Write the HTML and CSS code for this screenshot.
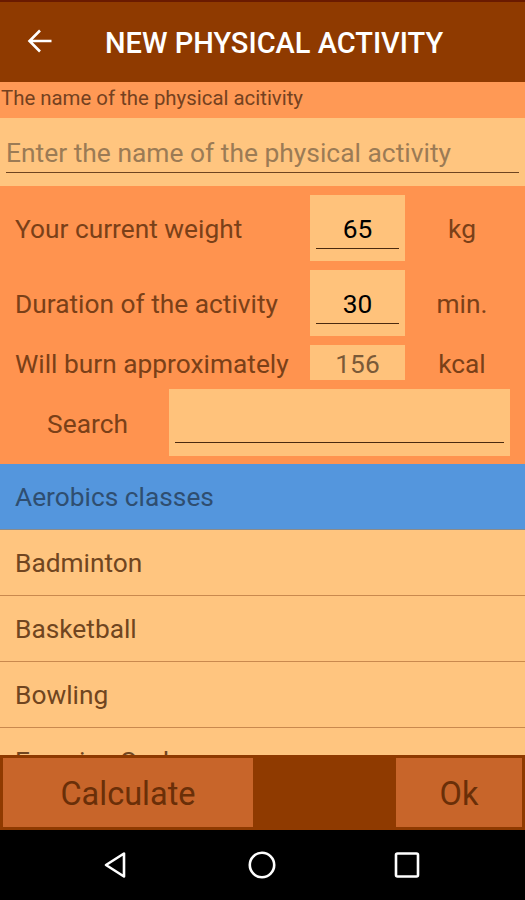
FILE: index.html
```html
<!DOCTYPE html>
<html lang="en">
  <head>
    <meta charset="utf-8" />
    <meta name="viewport" content="width=device-width, initial-scale=1" />
    <title>New physical activity</title>
    <link rel="stylesheet" href="styles.css">
  </head>
  <body>
    <div class="screen">
      <!-- toolbar -->
      <div class="toolbar">
        <svg class="back" width="26" height="26" viewBox="0 0 26 26">
          <path d="M24.5 13H2.5M13 2.5L2.5 13 13 23.5" fill="none" stroke="#fff" stroke-width="2.6"/>
        </svg>
        <span class="title">NEW PHYSICAL ACTIVITY</span>
      </div>

      <div class="name-label">The name of the physical acitivity</div>
      <div class="name-wrap">
        <div class="name-input">Enter the name of the physical activity</div>
      </div>

      <!-- weight / duration / result -->
      <div class="calc">
        <div class="row row-tall">
          <span class="label">Your current weight</span>
          <div class="box"><span class="val">65</span></div>
          <span class="unit">kg</span>
        </div>
        <div class="row row-tall">
          <span class="label">Duration of the activity</span>
          <div class="box"><span class="val">30</span></div>
          <span class="unit">min.</span>
        </div>
        <div class="row row-short">
          <span class="label">Will burn approximately</span>
          <div class="box box-plain">156</div>
          <span class="unit">kcal</span>
        </div>
        <div class="search-row">
          <span class="search-label">Search</span>
          <div class="search-box"><span class="search-line"></span></div>
        </div>
      </div>

      <!-- activity list -->
      <ul class="list">
        <li class="selected">Aerobics classes</li>
        <li>Badminton</li>
        <li>Basketball</li>
        <li>Bowling</li>
        <li>Exercise Cycle</li>
      </ul>

      <div class="actions">
        <button class="btn btn-calc">Calculate</button>
        <button class="btn btn-ok">Ok</button>
      </div>

      <!-- android nav bar -->
      <div class="navbar">
        <svg width="30" height="30" viewBox="0 0 30 30">
          <path d="M22 3.5 L22 26.5 L4 15 Z" fill="none" stroke="#fff" stroke-width="2.6" stroke-linejoin="round"/>
        </svg>
        <svg width="30" height="30" viewBox="0 0 30 30">
          <circle cx="15" cy="15" r="12.2" fill="none" stroke="#fff" stroke-width="2.6"/>
        </svg>
        <svg width="30" height="30" viewBox="0 0 30 30">
          <rect x="4" y="3.5" width="22" height="23" rx="1.5" fill="none" stroke="#fff" stroke-width="2.6"/>
        </svg>
      </div>
    </div>
  </body>
</html>
```

FILE: styles.css
```css
body{
    margin:0;
    background:#000;
    font-family:Roboto, "Liberation Sans", sans-serif;
}
.screen{
    width:525px;
    height:900px;
    display:flex;
    flex-direction:column;
    overflow:hidden;
}
.toolbar{
    height:80px;
    flex:none;
    background-color:#8f3a00;
    border-top:2px solid #6a1a00;
    display:flex;
    align-items:center;
    color:#fff;
}
.toolbar .back{
    margin-left:27px;
    margin-top:-2px;
}
.toolbar .title{
    margin-left:52px;
    font-size:29px;
    font-weight:500;
    margin-top:2px;
}
.name-label{
    height:36px;
    flex:none;
    background-color:#ff9955;
    color:#74411f;
    font-size:20.4px;
    line-height:32px;
    padding-left:1px;
}
.name-wrap{
    height:68px;
    flex:none;
    background-color:#ffc57f;
    padding:0 6px;
}
.name-input{
    height:54px;
    line-height:70px;
    font-size:26.4px;
    color:#9b7b55;
    border-bottom:1px solid #6e4420;
    white-space:nowrap;
}
.calc{
    height:278px;
    flex:none;
    background-color:#ff934f;
    padding-top:9px;
    box-sizing:border-box;
}
.row{
    display:grid;
    grid-template-columns:310px 95px 1fr;
    align-items:center;
    margin-bottom:9px;
    font-size:26.3px;
    color:#7a4018;
}
.row-tall{
    height:66px;
}
.row-short{
    height:35px;
}
.row .label{
    padding-left:15px;
    padding-top:2px;
    white-space:nowrap;
}
.row .unit{
    text-align:center;
    padding-right:6px;
    padding-top:2px;
}
.box{
    height:100%;
    background-color:#ffc27b;
    display:flex;
    align-items:center;
    justify-content:center;
}
.row-tall .box{
    align-items:flex-end;
}
.box .val{
    width:83px;
    text-align:center;
    color:#000;
    line-height:38px;
    border-bottom:1px solid #4a2a10;
    margin-bottom:12px;
}
.box-plain{
    color:#7a5a38;
    padding-top:2px;
    box-sizing:border-box;
}
.search-row{
    display:flex;
    height:67px;
    align-items:center;
}
.search-label{
    width:169px;
    text-align:center;
    font-size:26.3px;
    color:#7a4018;
    margin-top:3px;
    padding-left:6px;
    box-sizing:border-box;
}
.search-box{
    width:341px;
    height:100%;
    background-color:#ffc27b;
    padding:0 6px;
    box-sizing:border-box;
    display:flex;
    align-items:flex-end;
}
.search-line{
    display:block;
    width:100%;
    border-bottom:1px solid #4a2a10;
    margin-bottom:13px;
}
.list{
    flex:1;
    margin:0;
    padding:0;
    list-style:none;
    background-color:#ffc57f;
    overflow:hidden;
}
.list li{
    height:65px;
    line-height:67px;
    border-bottom:1px solid #c9894e;
    padding-left:15px;
    font-size:26.3px;
    color:#704520;
}
.list li.selected{
    background-color:#5496dd;
    color:#2f4e70;
    border-bottom-color:#8a8a8a;
}
.actions{
    height:75px;
    flex:none;
    background-color:#8f3a00;
    display:flex;
    justify-content:space-between;
    padding:3px;
    box-sizing:border-box;
}
.btn{
    height:69px;
    border:none;
    background-color:#c8652a;
    color:#6a2f08;
    font-family:Roboto, "Liberation Sans", sans-serif;
    font-size:32.5px;
    padding:2px 0 0;
}
.btn-calc{
    width:250px;
}
.btn-ok{
    width:126px;
}
.navbar{
    height:70px;
    flex:none;
    background-color:#000;
    display:flex;
    align-items:center;
    justify-content:space-between;
    padding:0 103px 0 102px;
}
```
